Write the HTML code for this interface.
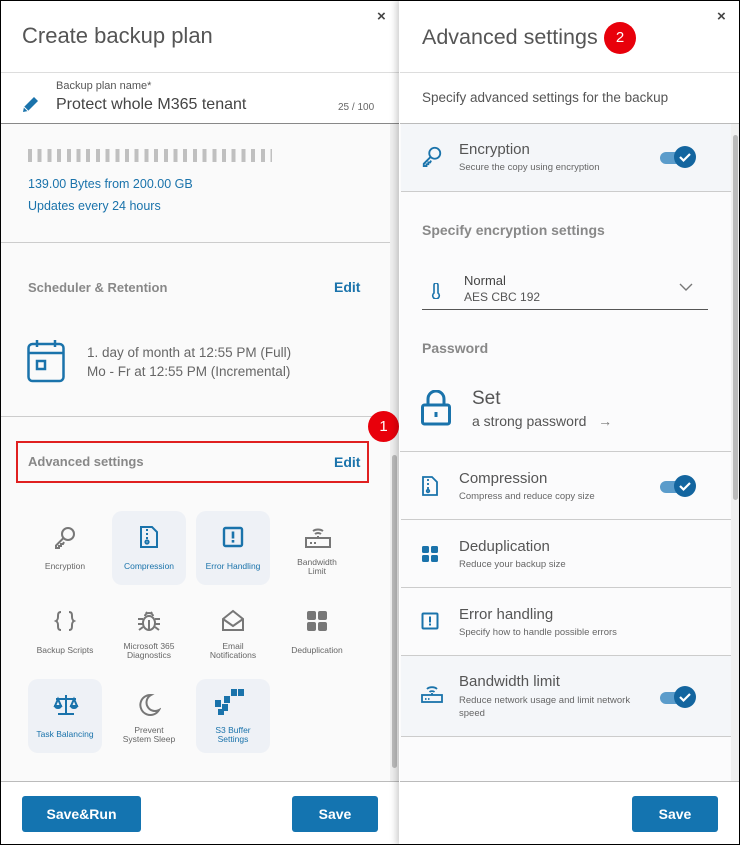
<!DOCTYPE html>
<html><head><meta charset="utf-8"><style>
*{box-sizing:border-box;margin:0;padding:0}
body{width:740px;height:845px;overflow:hidden;font-family:"Liberation Sans",sans-serif;background:#fff;position:relative}
.a{position:absolute}
.frame{position:absolute;left:0;top:0;width:740px;height:845px;border:1px solid #000;pointer-events:none;z-index:50}
.blue{color:#1a73ab}
.gray{color:#777}
.tile{position:absolute;width:74px;height:74px;border-radius:10px;text-align:center;font-size:8.5px;color:#666;line-height:9px}
.tile.on{background:#eef1f6;color:#1a73ab}
.tile svg{position:absolute;left:25px;top:14px}
.tile span{position:absolute;left:0;right:0;top:51px}
.tile span.two{top:47px}
.btn{position:absolute;background:#1474b0;color:#fff;font-weight:bold;font-size:14px;text-align:center;line-height:36px;border-radius:3px;height:36px}
.row{position:absolute;left:401px;width:330px;border-bottom:1px solid #ccc}
.row .t{position:absolute;left:58px;font-size:15px;color:#555}
.row .s{position:absolute;left:58px;font-size:9.5px;color:#666}
.row svg{position:absolute;left:20px}
.tog{position:absolute;left:259px;width:38px;height:24px}
.tog .tr{position:absolute;left:0;top:7px;width:32px;height:12px;border-radius:6px;background:#5b9ccb}
.tog .k{position:absolute;left:14px;top:1px;width:22px;height:22px;border-radius:50%;background:#13659f}
.sep{position:absolute;height:1px;background:#ccc}
</style></head><body>
<div class="frame"></div>

<!-- LEFT PANEL -->
<div class="a" style="left:0;top:0;width:400px;height:845px;background:#fff"></div>
<div class="a" style="left:22px;top:23px;font-size:22px;color:#555">Create backup plan</div>
<div class="a" style="left:377px;top:8px;font-size:15px;color:#444;font-weight:bold">×</div>
<div class="sep" style="left:0;top:72px;width:400px;background:#ddd"></div>
<svg class="a" style="left:21px;top:94px" width="20" height="20" viewBox="0 0 20 20"><path d="M2 18l1-5L13 3l4 4L7 17z" fill="#1a73ab"/><path d="M3 13l4 4" stroke="#fff" stroke-width="1"/></svg>
<div class="a" style="left:56px;top:80px;font-size:11px;color:#555">Backup plan name*</div>
<div class="a" style="left:56px;top:96px;font-size:16px;color:#444">Protect whole M365 tenant</div>
<div class="a" style="left:338px;top:102px;font-size:10px;color:#666">25 / 100</div>
<div class="sep" style="left:0;top:123px;width:400px;background:#888"></div>
<div class="a" style="left:0;top:124px;width:390px;height:657px;background:#fafafa"></div>
<div class="a" style="left:390px;top:124px;width:9px;height:657px;background:#f0f0f0"></div>
<div class="a" style="left:392px;top:455px;width:5px;height:313px;background:#bbb;border-radius:3px"></div>
<div class="a" style="left:28px;top:149px;width:244px;height:13px;background:repeating-linear-gradient(90deg,#c0c0c0 0 4px,transparent 4px 9.7px)"></div>
<div class="a blue" style="left:28px;top:177px;font-size:12.5px">139.00 Bytes from 200.00 GB</div>
<div class="a blue" style="left:28px;top:199px;font-size:12.5px">Updates every 24 hours</div>
<div class="sep" style="left:0;top:242px;width:390px"></div>
<div class="a" style="left:28px;top:280px;font-size:13px;font-weight:bold;color:#888">Scheduler &amp; Retention</div>
<div class="a blue" style="left:334px;top:279px;font-size:14px;font-weight:bold">Edit</div>
<svg class="a" style="left:27px;top:339px" width="40" height="44" viewBox="0 0 40 44"><rect x="1.5" y="5" width="35" height="37" rx="4" fill="none" stroke="#1a73ab" stroke-width="2.5"/><path d="M1.5 14h35M10 1v7M28 1v7" stroke="#1a73ab" stroke-width="2.5"/><rect x="10" y="22" width="8" height="8" fill="none" stroke="#1a73ab" stroke-width="2.5"/></svg>
<div class="a" style="left:87px;top:343px;font-size:13.5px;color:#666;line-height:19px">1. day of month at 12:55 PM (Full)<br>Mo - Fr at 12:55 PM (Incremental)</div>
<div class="sep" style="left:0;top:416px;width:390px"></div>
<div class="a" style="left:16px;top:441px;width:353px;height:42px;border:2px solid #e02020"></div>
<div class="a" style="left:28px;top:454px;font-size:13px;font-weight:bold;color:#888">Advanced settings</div>
<div class="a blue" style="left:334px;top:454px;font-size:14px;font-weight:bold">Edit</div>
<div class="a" style="left:368px;top:411px;width:31px;height:31px;border-radius:50%;background:#e8000b;color:#fff;font-size:15px;text-align:center;line-height:31px">1</div>

<div class="tile" style="left:28px;top:511px"><svg width="24" height="24" viewBox="0 0 24 24" fill="none" stroke="#777" stroke-width="2"><circle cx="15" cy="9" r="6"/><path d="M10.5 13L3 20.5V23h3v-2h2v-2h2l1-2"/></svg><span>Encryption</span></div>
<div class="tile on" style="left:112px;top:511px"><svg width="24" height="24" viewBox="0 0 24 24" fill="none" stroke="#1a73ab" stroke-width="2"><path d="M4 2h11l5 5v15H4z"/><path d="M10 4v2m0 2v2m0 2v2" /><circle cx="10" cy="17" r="1.6"/></svg><span>Compression</span></div>
<div class="tile on" style="left:196px;top:511px"><svg width="24" height="24" viewBox="0 0 24 24"><rect x="3" y="3" width="18" height="18" rx="1.5" fill="none" stroke="#1a73ab" stroke-width="2.4"/><rect x="10.7" y="6.5" width="2.6" height="7" fill="#1a73ab"/><rect x="10.7" y="15" width="2.6" height="2.6" fill="#1a73ab"/></svg><span>Error Handling</span></div>
<div class="tile" style="left:280px;top:511px"><svg width="26" height="24" viewBox="0 0 26 24" fill="none" stroke="#777" stroke-width="2"><rect x="1" y="13" width="24" height="9"/><path d="M8 6a7 5 0 0 1 10 0M10 9a4 3 0 0 1 6 0M13 11v2"/><path d="M5 18h2M9 18h2" stroke-width="2"/></svg><span class="two">Bandwidth<br>Limit</span></div>

<div class="tile" style="left:28px;top:595px"><svg width="24" height="24" viewBox="0 0 24 24" fill="none" stroke="#777" stroke-width="2"><path d="M8 3C5 3 5 5 5 8s-2 4-2 4 2 1 2 4 0 5 3 5M16 3c3 0 3 2 3 5s2 4 2 4-2 1-2 4 0 5-3 5"/></svg><span>Backup Scripts</span></div>
<div class="tile" style="left:112px;top:595px"><svg width="24" height="24" viewBox="0 0 24 24" fill="none" stroke="#777" stroke-width="2"><ellipse cx="12" cy="14" rx="6" ry="7"/><path d="M8 7a4 3 0 0 1 8 0M9 3l1.5 2M15 3l-1.5 2M1 10h5M18 10h5M1 15h5M18 15h5M2 21l4-3M22 21l-4-3M12 11v9"/></svg><span class="two">Microsoft 365<br>Diagnostics</span></div>
<div class="tile" style="left:196px;top:595px"><svg width="24" height="24" viewBox="0 0 24 24" fill="none" stroke="#777" stroke-width="2"><path d="M2 10L12 2l10 8v11H2z"/><path d="M2 10l10 7 10-7"/></svg><span class="two">Email<br>Notifications</span></div>
<div class="tile" style="left:280px;top:595px"><svg width="24" height="24" viewBox="0 0 24 24" fill="#777"><rect x="2" y="2" width="9" height="9" rx="2"/><rect x="13" y="2" width="9" height="9" rx="2"/><rect x="2" y="13" width="9" height="9" rx="2"/><rect x="13" y="13" width="9" height="9" rx="2"/></svg><span>Deduplication</span></div>

<div class="tile on" style="left:28px;top:679px"><svg width="26" height="24" viewBox="0 0 26 24" fill="none" stroke="#1a73ab" stroke-width="2"><path d="M13 2v19M5 21h16M3 6h20M5 6l-3 7h6zM21 6l-3 7h6z"/><path d="M2 13a3 2 0 0 0 6 0zM18 13a3 2 0 0 0 6 0z" fill="#1a73ab"/></svg><span>Task Balancing</span></div>
<div class="tile" style="left:112px;top:679px"><svg width="24" height="24" viewBox="0 0 24 24" fill="none" stroke="#777" stroke-width="2"><path d="M14 2A10 10 0 1 0 22 17 8 8 0 0 1 14 2z"/></svg><span class="two">Prevent<br>System Sleep</span></div>
<div class="tile on" style="left:196px;top:679px"><svg width="36" height="28" viewBox="0 0 36 28" style="left:19px;top:8px" fill="#1a73ab"><rect x="16" y="2" width="6" height="7"/><rect x="23" y="2" width="6" height="7"/><rect x="9" y="9" width="6" height="7"/><rect x="0" y="13" width="6" height="7"/><rect x="7" y="17" width="6" height="7"/><rect x="3" y="22" width="6" height="6"/></svg><span class="two">S3 Buffer<br>Settings</span></div>

<div class="sep" style="left:0;top:781px;width:400px;background:#bbb"></div>
<div class="btn" style="left:22px;top:796px;width:119px">Save&amp;Run</div>
<div class="btn" style="left:292px;top:796px;width:86px">Save</div>

<!-- RIGHT PANEL -->
<div class="a" style="left:399px;top:0;width:341px;height:845px;background:#fff;box-shadow:-3px 0 6px rgba(0,0,0,.18)"></div>
<div class="a" style="left:422px;top:25px;font-size:21.5px;color:#555">Advanced settings</div>
<div class="a" style="left:604px;top:22px;width:32px;height:32px;border-radius:50%;background:#e8000b;color:#fff;font-size:15px;text-align:center;line-height:32px">2</div>
<div class="a" style="left:717px;top:8px;font-size:15px;color:#444;font-weight:bold">×</div>
<div class="sep" style="left:400px;top:72px;width:340px;background:#ddd"></div>
<div class="a" style="left:422px;top:90px;font-size:13.5px;color:#555">Specify advanced settings for the backup</div>
<div class="sep" style="left:400px;top:123px;width:340px;background:#bbb"></div>
<div class="a" style="left:400px;top:124px;width:331px;height:657px;background:#fbfbfc"></div>
<div class="a" style="left:731px;top:124px;width:9px;height:657px;background:#f0f0f0"></div>
<div class="a" style="left:733px;top:135px;width:5px;height:365px;background:#bbb;border-radius:3px"></div>

<div class="row" style="top:124px;height:68px;background:#f4f6f9">
 <svg style="top:21px" width="22" height="22" viewBox="0 0 24 24" fill="none" stroke="#1a73ab" stroke-width="2"><circle cx="15" cy="9" r="6"/><path d="M10.5 13L3 20.5V23h3v-2h2v-2h2l1-2"/></svg>
 <div class="t" style="top:17px">Encryption</div><div class="s" style="top:38px">Secure the copy using encryption</div>
 <div class="tog" style="top:21px"><div class="tr"></div><div class="k"><svg width="22" height="22" viewBox="0 0 22 22" style="left:0;top:0"><path d="M6 11l3.5 3.5L16 8" fill="none" stroke="#fff" stroke-width="2.2"/></svg></div></div>
</div>
<div class="a" style="left:422px;top:222px;font-size:14px;font-weight:bold;color:#888">Specify encryption settings</div>
<svg class="a" style="left:431px;top:283px" width="10" height="16" viewBox="0 0 10 16" fill="none" stroke="#1a73ab" stroke-width="1.6"><path d="M3 10V2a2 2 0 0 1 4 0v8a3.3 3.3 0 1 1-4 0z"/></svg>
<div class="a" style="left:464px;top:273px;font-size:13px;color:#444">Normal</div>
<div class="a" style="left:464px;top:290px;font-size:12px;color:#555">AES CBC 192</div>
<svg class="a" style="left:679px;top:283px" width="14" height="9" viewBox="0 0 14 9"><path d="M1 1l6 6 6-6" fill="none" stroke="#777" stroke-width="1.4"/></svg>
<div class="sep" style="left:422px;top:309px;width:286px;background:#555"></div>
<div class="a" style="left:422px;top:340px;font-size:14px;font-weight:bold;color:#888">Password</div>
<svg class="a" style="left:421px;top:390px" width="30" height="36" viewBox="0 0 30 36"><path d="M7 15V9a8 8 0 0 1 16 0v6" fill="none" stroke="#1a73ab" stroke-width="3"/><rect x="1.5" y="15" width="27" height="19" rx="2" fill="none" stroke="#1a73ab" stroke-width="3"/><rect x="13.5" y="22" width="3" height="5" fill="#1a73ab"/></svg>
<div class="a" style="left:472px;top:388px;font-size:19px;color:#555">Set</div>
<div class="a" style="left:472px;top:413px;font-size:14px;color:#555">a strong password &nbsp;&nbsp;<span style="color:#777">→</span></div>
<div class="sep" style="left:400px;top:451px;width:331px"></div>

<div class="row" style="top:452px;height:68px">
 <svg style="top:24px" width="18" height="20" viewBox="0 0 18 20" fill="none" stroke="#1a73ab" stroke-width="1.8"><path d="M2 1h9l5 5v13H2z"/><path d="M7 3v2m0 2v2m0 2v2"/><circle cx="7" cy="15" r="1.3"/></svg>
 <div class="t" style="top:18px">Compression</div><div class="s" style="top:39px">Compress and reduce copy size</div>
 <div class="tog" style="top:22px"><div class="tr"></div><div class="k"><svg width="22" height="22" viewBox="0 0 22 22" style="left:0;top:0"><path d="M6 11l3.5 3.5L16 8" fill="none" stroke="#fff" stroke-width="2.2"/></svg></div></div>
</div>
<div class="row" style="top:520px;height:68px">
 <svg style="top:25px" width="18" height="18" viewBox="0 0 18 18" fill="#1a73ab"><rect x="1" y="1" width="7" height="7" rx="1.5"/><rect x="10" y="1" width="7" height="7" rx="1.5"/><rect x="1" y="10" width="7" height="7" rx="1.5"/><rect x="10" y="10" width="7" height="7" rx="1.5"/></svg>
 <div class="t" style="top:18px">Deduplication</div><div class="s" style="top:39px">Reduce your backup size</div>
</div>
<div class="row" style="top:588px;height:68px">
 <svg style="top:24px" width="18" height="18" viewBox="0 0 18 18"><rect x="1.5" y="1.5" width="15" height="15" rx="1" fill="none" stroke="#1a73ab" stroke-width="2"/><rect x="8" y="4.5" width="2" height="6" fill="#1a73ab"/><rect x="8" y="11.5" width="2" height="2" fill="#1a73ab"/></svg>
 <div class="t" style="top:18px">Error handling</div><div class="s" style="top:39px">Specify how to handle possible errors</div>
</div>
<div class="row" style="top:656px;height:81px;background:#f4f6f9">
 <svg style="top:28px" width="22" height="20" viewBox="0 0 22 20" fill="none" stroke="#1a73ab" stroke-width="1.8"><rect x="1" y="11" width="20" height="7"/><path d="M6 5a6 4 0 0 1 10 0M8.5 8a3 2 0 0 1 5 0M11 9v2M4 15h1.5M7 15h1.5"/></svg>
 <div class="t" style="top:17px">Bandwidth limit</div><div class="s" style="top:38px;line-height:13px">Reduce network usage and limit network<br>speed</div>
 <div class="tog" style="top:29px"><div class="tr"></div><div class="k"><svg width="22" height="22" viewBox="0 0 22 22" style="left:0;top:0"><path d="M6 11l3.5 3.5L16 8" fill="none" stroke="#fff" stroke-width="2.2"/></svg></div></div>
</div>
<div class="sep" style="left:400px;top:781px;width:340px;background:#bbb"></div>
<div class="btn" style="left:632px;top:796px;width:86px">Save</div>
</body></html>
